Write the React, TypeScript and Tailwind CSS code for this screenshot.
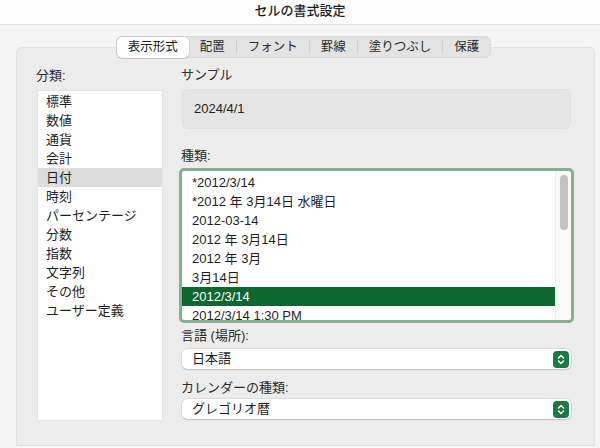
const font = { fontFamily: '"Liberation Sans", "Noto Sans CJK JP", sans-serif' };

const tabs = ['表示形式', '配置', 'フォント', '罫線', '塗りつぶし', '保護'];

const categories = [
  '標準',
  '数値',
  '通貨',
  '会計',
  '日付',
  '時刻',
  'パーセンテージ',
  '分数',
  '指数',
  '文字列',
  'その他',
  'ユーザー定義',
];

const types = [
  '*2012/3/14',
  '*2012 年 3月14日 水曜日',
  '2012-03-14',
  '2012 年 3月14日',
  '2012 年 3月',
  '3月14日',
  '2012/3/14',
  '2012/3/14 1:30 PM',
];

function Tabs() {
  return (
    <div className="relative z-10 flex justify-center -mb-[11px] pr-[4px]">
      <div className="flex items-center h-[22px] rounded-[6px] bg-[#e3e3e3] border border-[#dadada] text-[12.5px]">
        {tabs.map((tab, i) => (
          <div key={tab} className="flex items-center h-full">
            {i > 1 && <div className="w-px h-[12px] bg-[#cdcdcd]" />}
            <div
              className={
                i === 0
                  ? 'h-[21px] flex items-center px-[11px] bg-white rounded-[5px] shadow-[0_0_0_0.5px_rgba(0,0,0,0.12),0_1px_1px_rgba(0,0,0,0.12)] text-[#1d1d1d]'
                  : 'h-[21px] flex items-center px-[11px] text-[#2a2a2a]'
              }
            >
              {tab}
            </div>
          </div>
        ))}
      </div>
    </div>
  );
}

function Select({ value }: { value: string }) {
  return (
    <div className="h-[20px] flex items-center justify-between bg-white rounded-[5px] shadow-[0_0_0_0.5px_rgba(0,0,0,0.14),0_1px_1.5px_rgba(0,0,0,0.12)] pl-[10px] pr-[2px]">
      <span className="text-[#1f1f1f]">{value}</span>
      <div className="w-[16px] h-[17px] rounded-[4px] bg-[#1b7a42] flex items-center justify-center">
        <svg width="8" height="11" viewBox="0 0 8 11">
          <path
            d="M1.5 4 L4 1.5 L6.5 4 M1.5 7 L4 9.5 L6.5 7"
            stroke="white"
            strokeWidth="1.5"
            fill="none"
            strokeLinecap="round"
            strokeLinejoin="round"
          />
        </svg>
      </div>
    </div>
  );
}

export default function App() {
  return (
    <div className="w-[600px] h-[448px] flex flex-col bg-[#f5f5f5] text-[13px] overflow-hidden" style={font}>
      {/* title bar */}
      <div className="h-[25px] flex-none flex items-center justify-center bg-[#fcfcfc] border-b border-[#e2e2e2]">
        <span className="text-[13px] font-medium text-[#1e1e1e] -mt-[3px]">セルの書式設定</span>
      </div>

      <div className="flex-1 flex flex-col pt-[11px] pl-4 pr-[5px]">
        <Tabs />

        <div className="h-[399px] flex-none flex bg-[#ececec] border border-[#e2e2e2] rounded-t-[6px] pt-[19px]">
          {/* category */}
          <div className="ml-[20px] w-[126px] flex flex-col">
            <div className="h-[18px] -ml-px text-[#2b2b2b] leading-[18px]">分類:</div>
            <div className="mt-[5px] h-[331px] bg-white border border-[#e4e4e4] pt-[1px]">
              {categories.map((c, i) => (
                <div
                  key={c}
                  className={`h-[19px] leading-[19px] pl-2 text-[#1f1f1f] ${i === 4 ? 'bg-[#dcdcdc]' : ''}`}
                >
                  {c}
                </div>
              ))}
            </div>
          </div>

          {/* right side */}
          <div className="ml-[19px] w-[389px] flex flex-col">
            <div className="h-[18px] leading-[18px] -ml-px -mt-px text-[#2b2b2b]">サンプル</div>
            <div className="mt-[5px] h-[40px] flex items-center pl-[11px] bg-[#e5e5e5] rounded-[6px] border border-[#e0e0e0] text-[#1f1f1f]">
              2024/4/1
            </div>

            <div className="mt-[18px] h-[18px] leading-[18px] -ml-px text-[#2b2b2b]">種類:</div>
            <div className="mt-[6px] h-[149px] flex bg-white rounded-[2px] outline-[3px] outline-solid outline-[#84b08f] overflow-hidden">
              <div className="flex-1 pt-[2px]">
                {types.map((t, i) => (
                  <div
                    key={t}
                    className={`h-[19px] leading-[19px] pl-[10px] whitespace-nowrap ${
                      i === 6 ? 'bg-[#0d672f] text-white' : 'text-[#1f1f1f]'
                    }`}
                  >
                    {t}
                  </div>
                ))}
              </div>
              <div className="w-[16px] border-l border-[#ededed] bg-[#fafafa] flex justify-center pt-[4px]">
                <div className="w-[8px] h-[55px] rounded-full bg-[#c2c2c2]" />
              </div>
            </div>

            <div className="mt-[7px] h-[18px] leading-[18px] -ml-px text-[#2b2b2b]">言語 (場所):</div>
            <div className="mt-[4px]">
              <Select value="日本語" />
            </div>

            <div className="mt-[10px] h-[18px] leading-[18px] -ml-px text-[#2b2b2b]">カレンダーの種類:</div>
            <div className="mt-[2px]">
              <Select value="グレゴリオ暦" />
            </div>
          </div>
        </div>
      </div>
    </div>
  );
}
